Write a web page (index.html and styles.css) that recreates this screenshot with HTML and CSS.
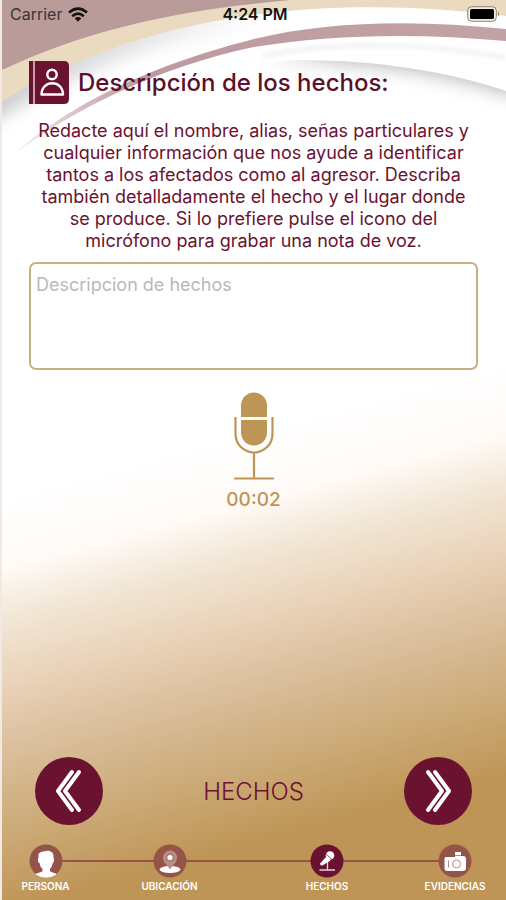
FILE: index.html
```html
<!DOCTYPE html>
<html lang="es">
<head>
<meta charset="utf-8">
<meta name="viewport" content="width=device-width, initial-scale=1">
<title>Descripción de los hechos</title>
<link rel="stylesheet" href="styles.css">
</head>
<body>
<div class="screen">
  <svg class="waves" viewBox="0 0 506 170" preserveAspectRatio="none" aria-hidden="true">
    <defs>
      <filter id="soft" x="-20%" y="-50%" width="140%" height="200%"><feGaussianBlur stdDeviation="8"/></filter>
      <filter id="fine" x="-20%" y="-50%" width="140%" height="200%"><feGaussianBlur stdDeviation="2"/></filter>
      <clipPath id="under"><path d="M255 62C340 56 430 66 506 91V170H255Z"/></clipPath>
      <clipPath id="left"><path d="M0 101C90 43 190 12 330 8V170H0Z"/></clipPath>
      <linearGradient id="fade" x1="0" x2="1"><stop offset="0" stop-color="#ccccd0"/><stop offset=".5" stop-color="#e8e8ea"/><stop offset=".8" stop-color="#fff"/></linearGradient>
      <linearGradient id="edge" x1="0" x2="1"><stop offset="0" stop-color="#c6c6ca" stop-opacity="0"/><stop offset=".3" stop-color="#c6c6ca"/></linearGradient>
      <linearGradient id="thin" x1="0" x2="1"><stop offset="0" stop-color="#bd9aa0" stop-opacity=".2"/><stop offset=".25" stop-color="#bd9aa0"/><stop offset="1" stop-color="#c3a2a5"/></linearGradient>
    </defs>
    <g clip-path="url(#left)"><path d="M-20 112C90 43 190 12 330 8" fill="none" stroke="url(#fade)" stroke-width="30" filter="url(#soft)"/></g>
    <path d="M262 56C330 42 420 41 506 58" fill="none" stroke="#f0f0f2" stroke-width="4" filter="url(#fine)"/>
    <g clip-path="url(#under)"><path d="M265 59C340 54 430 64 516 92" fill="none" stroke="url(#edge)" stroke-width="13" filter="url(#soft)"/><path d="M275 61C340 56 430 66 516 94" fill="none" stroke="url(#edge)" stroke-width="2" filter="url(#fine)"/></g>
    <path d="M0 0H506V16C330-6 150 10 0 101Z" fill="#e9dac0"/>
    <path d="M0 0H290C180 10 90 28 0 70Z" fill="#b99b99"/>
    <path d="M14 153C50 120 122 72 253 39C330 20 420 20 506 29V41C420 33 330 34 253 47C160 66 70 110 14 153Z" fill="url(#thin)"/>
  </svg>

  <header class="status">
    <span class="carrier">Carrier
      <svg class="wifi" viewBox="0 0 20 15" aria-hidden="true"><g fill="none" stroke="#151214" stroke-width="2.6"><path d="M1 5.6Q10-2.2 19 5.6"/><path d="M4.2 9.2Q10 4.2 15.800 9.200"/></g><path d="M6.600 11.300Q10 8.600 13.400 11.300L10 14.800Z" fill="#151214"/></svg>
    </span>
    <span class="clock">4:24 PM</span>
    <svg class="battery" viewBox="0 0 33 16" aria-hidden="true"><rect x=".7" y=".7" width="28.600" height="14.600" rx="4" fill="#f5ecdc" stroke="#8b8375" stroke-width="1"/><rect x="3" y="3" width="24" height="10" rx="1.500" fill="#000"/><path d="M31 5.500Q33 8 31 10.500Z" fill="#777064"/></svg>
  </header>

  <main class="content">
    <h1 class="title">
      <svg class="book" viewBox="0 0 40 43" aria-hidden="true"><path d="M0 0H4V43H0ZM6 0H35Q40 0 40 5V38Q40 43 35 43H6Z" fill="#6b1230"/><path d="M5 0V43" stroke="#b58c98" stroke-width="1.500"/><g fill="none" stroke="#fff" stroke-width="2.400"><circle cx="23" cy="13.500" r="4.700"/><path d="M12.500 33.500C12.500 18.500 34 18.500 34 33.500Z" stroke-linejoin="round"/></g></svg>
      Descripción de los hechos:
    </h1>
    <p class="help" id="help">Redacte aquí el nombre, alias, señas particulares y cualquier información que nos ayude a identificar tantos a los afectados como al agresor. Describa también detalladamente el hecho y el lugar donde se produce. Si lo prefiere pulse el icono del micrófono para grabar una nota de voz.</p>
    <textarea class="facts" aria-label="Descripcion de hechos" aria-describedby="help" placeholder="Descripcion de hechos"></textarea>
    <button class="record" type="button" aria-label="Grabar nota de voz">
      <svg class="mic" viewBox="0 0 40 88" aria-hidden="true"><path d="M7 25V13.500A13 13 0 0 1 33 13.500V25ZM7 28H33V40.500A13 13 0 0 1 7 40.500Z" fill="#bd9555"/><g fill="none" stroke="#bd9555" stroke-width="2.200"><path d="M1.500 25V42A18.500 18.500 0 0 0 38.500 42V25"/><path d="M20 60.500V86M0 86.500H40"/></g></svg>
    </button>
    <time class="timer">00:02</time>
  </main>

  <nav class="pager">
    <button class="arrow" type="button" aria-label="Anterior">
      <svg viewBox="0 0 68 68" aria-hidden="true"><g fill="none" stroke="#fff" stroke-width="4" stroke-linecap="round" stroke-linejoin="round"><path d="M37 15L23 34L37 53"/><path d="M44 15L30 34L44 53"/></g></svg>
    </button>
    <span class="section">HECHOS</span>
    <button class="arrow" type="button" aria-label="Siguiente">
      <svg viewBox="0 0 68 68" aria-hidden="true"><g fill="none" stroke="#fff" stroke-width="4" stroke-linecap="round" stroke-linejoin="round"><path d="M31 15L45 34L31 53"/><path d="M24 15L38 34L24 53"/></g></svg>
    </button>
  </nav>

  <ol class="steps">
    <li class="step">
      <svg viewBox="0 0 34 34" aria-hidden="true"><circle cx="17" cy="17" r="16.500" fill="#955448"/><path d="M9.500 14C8.500 8.500 12 7.500 15 7.500C18 6 25.500 6.500 24.500 14C26 15 24.500 19 23.500 19.500C23 23 21.500 24 21 25V27C23 29 26.500 28.500 27.500 30.500Q17 37 6.500 30.500C7.500 28.500 12 29 13.500 27V25C12 23.500 11 22 10.700 19.500C9 19 8.300 14.500 9.500 14Z" fill="#fff"/></svg>
      PERSONA
    </li>
    <li class="step">
      <svg viewBox="0 0 34 34" aria-hidden="true"><circle cx="17" cy="17" r="16.500" fill="#955448"/><ellipse cx="17" cy="25.500" rx="10.500" ry="3.500" fill="#fff"/><path d="M17 25.500C14 20.500 10 18.500 10 13.500A7 7 0 0 1 24 13.500C24 18.500 20 20.500 17 25.500Z" fill="#b78f86"/><circle cx="17" cy="13.500" r="4.300" fill="#a97b70"/><circle cx="17" cy="13.500" r="2.600" fill="#fff"/></svg>
      UBICACIÓN
    </li>
    <li class="step" aria-current="step">
      <svg viewBox="0 0 34 34" aria-hidden="true"><circle cx="17" cy="17" r="16.500" fill="#6b1230"/><path d="M16.500 12.500L20.500 16.500L12.500 21.500Q10 22 10 19.500Z" fill="#fff"/><circle cx="20" cy="11.500" r="4.300" fill="#fff"/><path d="M15.500 9.500L22.500 16" stroke="#6b1230" stroke-width=".7"/><path d="M17.500 18V25.500M9.500 26H25" fill="none" stroke="#e4d2d7" stroke-width="1.300"/></svg>
      HECHOS
    </li>
    <li class="step">
      <svg viewBox="0 0 34 34" aria-hidden="true"><circle cx="17" cy="17" r="16.500" fill="#955448"/><path d="M8 13H17V8H23V12H25Q28 12 28 15V24Q28 27 25 27H9Q6.500 27 6.500 24V15Q6.500 13 8 13Z" fill="#fff"/><g fill="none" stroke="#b38d85" stroke-width="1"><circle cx="18.500" cy="20" r="4"/><path d="M10.500 16.500V23.500M17 11.500H23"/></g></svg>
      EVIDENCIAS
    </li>
  </ol>
</div>
</body>
</html>
```
FILE: styles.css
```css
* {
  box-sizing: border-box;
}

body {
  margin: 0;
  font-family: Inter, "Liberation Sans", sans-serif;
  color: #6b1230;
}

button {
  padding: 0;
  border: 0;
  background: none;
  cursor: pointer;
}

svg {
  display: block;
}

.screen {
  position: relative;
  isolation: isolate;
  display: flex;
  flex-direction: column;
  min-height: 100vh;
  border-left: 2px solid #f1e9e4;
  background: linear-gradient(165deg, #fff 48%, #fffaf6 55%, #f2e6d5 60%, #e8d0b5 67%, #d8bb96 74%, #cdac7a 80%, #be9556 88%);
}

.waves {
  position: absolute;
  z-index: -1;
  top: 0;
  left: 0;
  width: 100%;
  height: 170px;
}

.status {
  display: grid;
  grid-template-columns: 1fr auto 1fr;
  align-items: center;
  height: 28px;
  padding: 0 6px 0 8px;
  font-size: 16px;
  color: #3c3437;
}

.carrier {
  display: flex;
  align-items: center;
  gap: 6px;
}

.wifi {
  width: 20px;
  height: 15px;
}

.clock {
  font-weight: 600;
  color: #151214;
}

.battery {
  justify-self: end;
  width: 33px;
  height: 16px;
}

.content {
  display: flex;
  flex-direction: column;
  align-items: center;
  padding: 33px 28px 0 27px;
}

.title {
  display: flex;
  align-items: center;
  align-self: stretch;
  gap: 9px;
  margin: 0;
  font-size: 24px;
  font-weight: 500;
  line-height: 43px;
  color: #5c1029;
}

.book {
  width: 40px;
  height: 43px;
}

.help {
  margin: 16px 0 10px;
  padding: 0 6px;
  font-size: 18px;
  line-height: 22px;
  text-align: center;
}

.facts {
  display: block;
  width: 100%;
  height: 108px;
  padding: 9px 5px;
  border: 2px solid #c9af83;
  border-radius: 7px;
  background: #fff;
  font: inherit;
  font-size: 18px;
  line-height: 24px;
  color: #6b1230;
  resize: none;
}

.facts::placeholder {
  color: #b9b9bb;
  opacity: 1;
}

.record {
  margin-top: 22px;
}

.mic {
  width: 40px;
  height: 88px;
}

.timer {
  margin-top: 8px;
  font-size: 19px;
  font-weight: 500;
  line-height: 24px;
  color: #bd9555;
}

.pager {
  display: flex;
  align-items: center;
  justify-content: space-between;
  margin-top: auto;
  padding: 0 34px 0 33px;
}

.arrow {
  width: 68px;
  height: 68px;
  border-radius: 50%;
  background: #6b1230;
}

.section {
  font-size: 24px;
  font-weight: 300;
}

.steps {
  position: relative;
  display: grid;
  grid-template-columns: 87fr 161fr 154fr 102fr;
  margin: 19px 0 8px;
  padding: 0;
  list-style: none;
}

.steps::before {
  content: "";
  position: absolute;
  z-index: -1;
  top: 16px;
  left: 9%;
  right: 10%;
  height: 2px;
  background: #955448;
}

.step {
  display: flex;
  flex-direction: column;
  align-items: center;
  gap: 2px;
  font-size: 10px;
  font-weight: 600;
  line-height: 12px;
  color: #fff;
}

.step svg {
  width: 34px;
  height: 34px;
}
```
